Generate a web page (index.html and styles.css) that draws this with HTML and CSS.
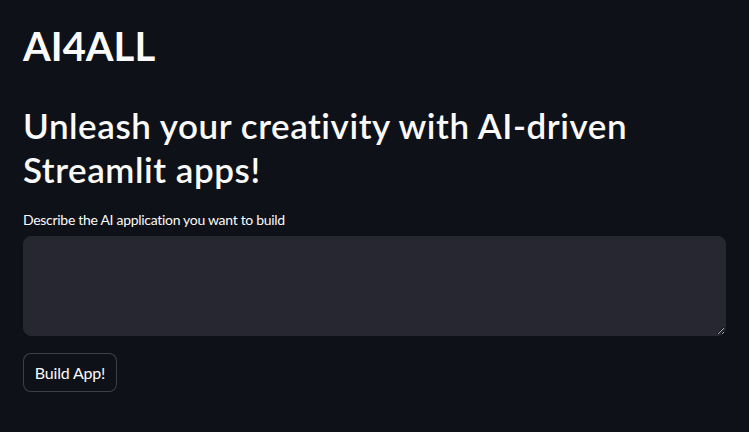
FILE: index.html
```html
<!DOCTYPE html>
<html lang="en">
<head>
<meta charset="utf-8">
<title>AI4ALL</title>
<link rel="stylesheet" href="styles.css">
</head>
<body>
<main class="app">
  <h1 class="title">AI4ALL</h1>
  <h2 class="subtitle">Unleash your creativity with AI-driven Streamlit apps!</h2>
  <label class="field-label" for="desc">Describe the AI application you want to build</label>
  <textarea id="desc" class="field-input"></textarea>
  <button class="btn">Build App!</button>
</main>
</body>
</html>
```
FILE: styles.css
```css
html, body {
  margin: 0;
  padding: 0;
  background: #0e1117;
  color: #fafafa;
  font-family: "Source Sans Pro", "Lato", "Noto Sans", sans-serif;
}
.app {
  display: flex;
  flex-direction: column;
  align-items: flex-start;
  padding: 22px 23px 0 23px;
}
.title {
  margin: 0;
  font-size: 40px;
  line-height: 48px;
  font-weight: 700;
}
.subtitle {
  margin: 33px 0 0 0;
  font-size: 35px;
  line-height: 44px;
  font-weight: 600;
  letter-spacing: 0.55px;
  max-width: 650px;
}
.field-label {
  margin-top: 19px;
  font-size: 14px;
  line-height: 20px;
  letter-spacing: -0.3px;
}
.field-input {
  margin-top: 6px;
  box-sizing: border-box;
  width: 100%;
  height: 100px;
  background: #262730;
  border: 1px solid #262730;
  border-radius: 8px;
  color: #fafafa;
  font: inherit;
  padding: 8px 12px;
}
.btn {
  margin-top: 17px;
  box-sizing: border-box;
  height: 39px;
  width: 94px;
  background: #0e1117;
  color: #fafafa;
  border: 1px solid rgba(250,250,250,0.2);
  border-radius: 8px;
  font-family: inherit;
  font-size: 16px;
  white-space: nowrap;
  padding: 0;
  text-align: center;
  letter-spacing: -0.2px;
}
```
